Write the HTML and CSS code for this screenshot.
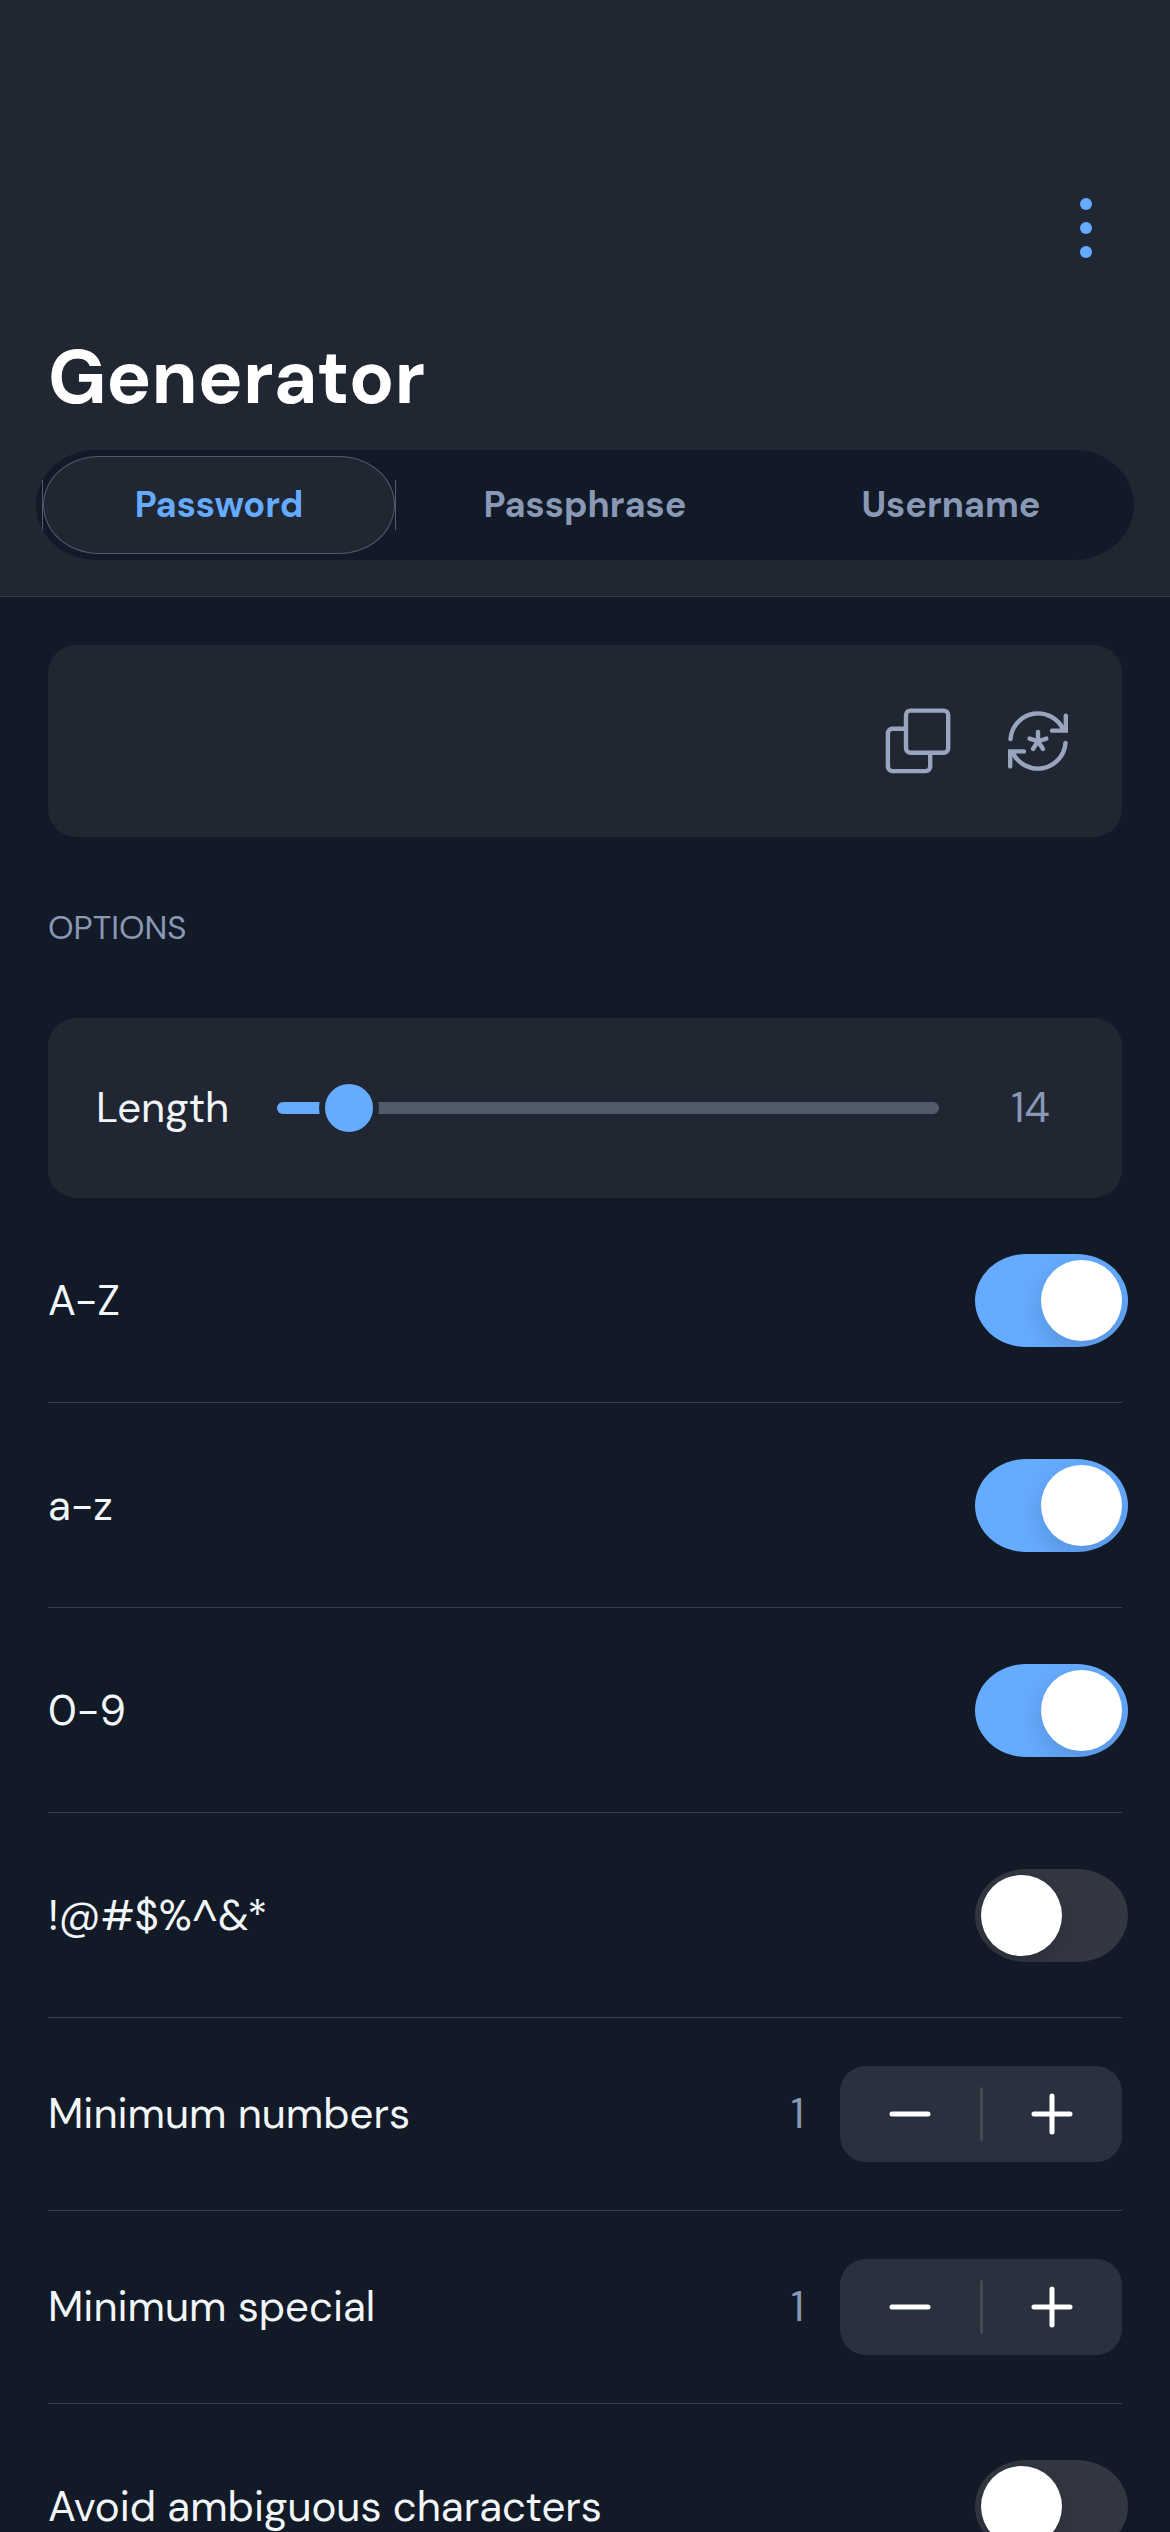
FILE: index.html
```html
<!DOCTYPE html>
<html lang="en">
<head>
<meta charset="utf-8">
<meta name="viewport" content="width=device-width, initial-scale=1">
<title>Generator</title>
<link rel="stylesheet" href="styles.css">
</head>
<body>
<header class="header">
  <div class="toolbar">
    <button class="icon-button icon-button--accent" type="button" aria-label="More options">
      <svg class="icon" viewBox="0 0 72 72" fill="currentColor" aria-hidden="true">
        <circle cx="36" cy="12" r="6"/><circle cx="36" cy="36" r="6"/><circle cx="36" cy="60" r="6"/>
      </svg>
    </button>
  </div>
  <h1 class="title">Generator</h1>
  <nav class="tabs" aria-label="Generator type">
    <button class="tab tab--selected" type="button" aria-pressed="true">Password</button>
    <button class="tab" type="button" aria-pressed="false">Passphrase</button>
    <button class="tab" type="button" aria-pressed="false">Username</button>
  </nav>
</header>

<main class="content">
  <section class="card card--value">
    <output class="generated" aria-label="Generated password"></output>
    <button class="icon-button" type="button" aria-label="Copy">
      <svg class="icon icon--line" viewBox="0 0 72 72" aria-hidden="true">
        <rect x="24" y="5.6" width="42.2" height="42.2" rx="4.5"/>
        <path d="M24 23.8H10.4a4.5 4.5 0 0 0-4.5 4.5v33.3a4.5 4.5 0 0 0 4.5 4.5h33.3a4.5 4.5 0 0 0 4.5-4.5V48"/>
      </svg>
    </button>
    <button class="icon-button" type="button" aria-label="Regenerate">
      <svg class="icon icon--line" viewBox="0 0 72 72" aria-hidden="true">
        <path d="M8.5 34A27.7 27.7 0 0 1 61.5 25"/>
        <path d="M63.8 10.6V25.6H50"/>
        <path d="M63.5 38A27.7 27.7 0 0 1 10.5 47"/>
        <path d="M8.2 61.4V46.4H22"/>
        <path d="M36 27v9.3M27.6 33.6l8.4 2.7 8.4-2.7M31 44l5-7.7 5 7.7"/>
      </svg>
    </button>
  </section>

  <h2 class="section-title">OPTIONS</h2>

  <section class="card card--length">
    <label for="length">Length</label>
    <input class="slider" id="length" type="range" min="5" max="128" value="14">
    <output class="length-value" for="length">14</output>
  </section>

  <div class="row">
    <label class="row-label" for="upper">A-Z</label>
    <input class="toggle" id="upper" type="checkbox" role="switch" checked>
  </div>
  <div class="row">
    <label class="row-label" for="lower">a-z</label>
    <input class="toggle" id="lower" type="checkbox" role="switch" checked>
  </div>
  <div class="row">
    <label class="row-label" for="digits">0-9</label>
    <input class="toggle" id="digits" type="checkbox" role="switch" checked>
  </div>
  <div class="row">
    <label class="row-label" for="symbols">!@#$%^&amp;*</label>
    <input class="toggle" id="symbols" type="checkbox" role="switch">
  </div>
  <div class="row row--stepper">
    <span class="row-label" id="min-numbers">Minimum numbers</span>
    <output class="count" aria-labelledby="min-numbers">1</output>
    <div class="stepper" role="group" aria-labelledby="min-numbers">
      <button class="step" type="button" aria-label="Decrease">
        <svg class="step-icon" viewBox="0 0 48 48" aria-hidden="true"><path d="M6 24h36"/></svg>
      </button>
      <span class="divider"></span>
      <button class="step" type="button" aria-label="Increase">
        <svg class="step-icon" viewBox="0 0 48 48" aria-hidden="true"><path d="M6 24h36M24 6v36"/></svg>
      </button>
    </div>
  </div>
  <div class="row row--stepper">
    <span class="row-label" id="min-special">Minimum special</span>
    <output class="count" aria-labelledby="min-special">1</output>
    <div class="stepper" role="group" aria-labelledby="min-special">
      <button class="step" type="button" aria-label="Decrease">
        <svg class="step-icon" viewBox="0 0 48 48" aria-hidden="true"><path d="M6 24h36"/></svg>
      </button>
      <span class="divider"></span>
      <button class="step" type="button" aria-label="Increase">
        <svg class="step-icon" viewBox="0 0 48 48" aria-hidden="true"><path d="M6 24h36M24 6v36"/></svg>
      </button>
    </div>
  </div>
  <div class="row">
    <label class="row-label" for="ambiguous">Avoid ambiguous characters</label>
    <input class="toggle" id="ambiguous" type="checkbox" role="switch">
  </div>
</main>
</body>
</html>
```
FILE: styles.css
```css
:root {
  --page: #121a27;
  --surface: #202733;
  --line: #3a3d46;
  --text: #f3f6f9;
  --muted: #8898b5;
  --accent: #65abff;
  --track: #525b6a;
}

* {
  box-sizing: border-box;
}

body {
  margin: 0;
  background: var(--page);
  color: var(--text);
  font: 42px/56px "DM Sans", Inter, "Liberation Sans", sans-serif;
}

button {
  padding: 0;
  border: 0;
  background: none;
  color: inherit;
  font: inherit;
}

.header {
  padding: 180px 36px 36px;
  background: var(--surface);
  border-bottom: 1px solid var(--line);
}

.toolbar {
  display: flex;
  justify-content: flex-end;
  align-items: center;
  height: 96px;
  padding-right: 12px;
}

.icon-button {
  display: block;
  flex: none;
  color: #99a5be;
}

.icon-button--accent {
  color: var(--accent);
}

.icon {
  display: block;
  width: 72px;
  height: 72px;
}

.icon--line {
  fill: none;
  stroke: currentColor;
  stroke-width: 4.4;
  stroke-linecap: round;
  stroke-linejoin: miter;
}

.title {
  margin: 54px 12px 24px;
  color: #fff;
  font-size: 75px;
  font-weight: 700;
  line-height: 96px;
}

.tabs {
  display: flex;
  padding: 6px 0;
  border-radius: 60px / 55px;
  background: var(--page);
}

.tab {
  position: relative;
  flex: 1;
  height: 98px;
  margin: 0 7px;
  border: 1px solid transparent;
  border-radius: 56px / 49px;
  color: var(--muted);
  font-size: 36px;
  font-weight: 700;
}

.tab--selected {
  border-color: var(--track);
  background: var(--surface);
  color: var(--accent);
}

/* short vertical ticks at both ends of the selected tab */
.tab--selected::before {
  content: "";
  position: absolute;
  top: 23px;
  bottom: 23px;
  left: -2px;
  right: -2px;
  border: solid var(--track);
  border-width: 0 1px;
}

.content {
  padding: 48px 48px 0;
}

.card {
  display: flex;
  align-items: center;
  gap: 48px;
  padding: 0 48px;
  border-radius: 28px;
  background: var(--surface);
}

.card--value {
  min-height: 192px;
}

.card--length {
  min-height: 180px;
}

.generated {
  flex: 1;
}

.section-title {
  margin: 69px 0;
  color: var(--muted);
  font-size: 33px;
  font-weight: 400;
  line-height: 43px;
}

.slider {
  flex: 1;
  min-width: 0;
  height: 60px;
  margin: 0;
  appearance: none;
  background: none;
}

.slider::-webkit-slider-runnable-track {
  height: 12px;
  border-radius: 6px;
  background: linear-gradient(90deg, var(--accent) 11%, var(--track) 11%);
}

.slider::-webkit-slider-thumb {
  appearance: none;
  width: 54px;
  height: 54px;
  margin-top: -21px;
  border: 3px solid var(--surface);
  border-radius: 50%;
  background: var(--accent);
  box-shadow: 0 0 0 3px var(--surface);
}

.length-value {
  width: 87px;
  color: var(--muted);
  text-align: center;
}

.row {
  display: flex;
  align-items: center;
  padding: 56px 0 55px;
  border-bottom: 1px solid var(--line);
}

.row--stepper {
  padding: 48px 0;
}

.row-label {
  flex: 1;
  line-height: 48px;
}

/* the switch hangs slightly past the row's right edge */
.toggle {
  display: flex;
  align-items: center;
  width: 153px;
  height: 93px;
  margin: 0 -6px 0 0;
  padding: 6px;
  appearance: none;
  border-radius: 52px / 47px;
  background: #323742;
  overflow: hidden;
}

.toggle::before {
  content: "";
  width: 81px;
  height: 81px;
  border-radius: 50%;
  background: #fff;
  box-shadow: 0 9px 24px rgba(0, 0, 0, 0.15);
}

.toggle:checked {
  justify-content: flex-end;
  background: var(--accent);
}

.count {
  margin-right: 36px;
  color: var(--muted);
}

.stepper {
  display: flex;
  align-items: center;
  width: 282px;
  height: 96px;
  border-radius: 26px;
  background: #2b303e;
}

.step {
  display: flex;
  flex: 1;
  justify-content: center;
}

.step-icon {
  width: 48px;
  height: 48px;
  fill: none;
  stroke: #fff;
  stroke-width: 5;
  stroke-linecap: round;
}

.divider {
  width: 3px;
  height: 54px;
  border-radius: 2px;
  background: #464953;
}
```
